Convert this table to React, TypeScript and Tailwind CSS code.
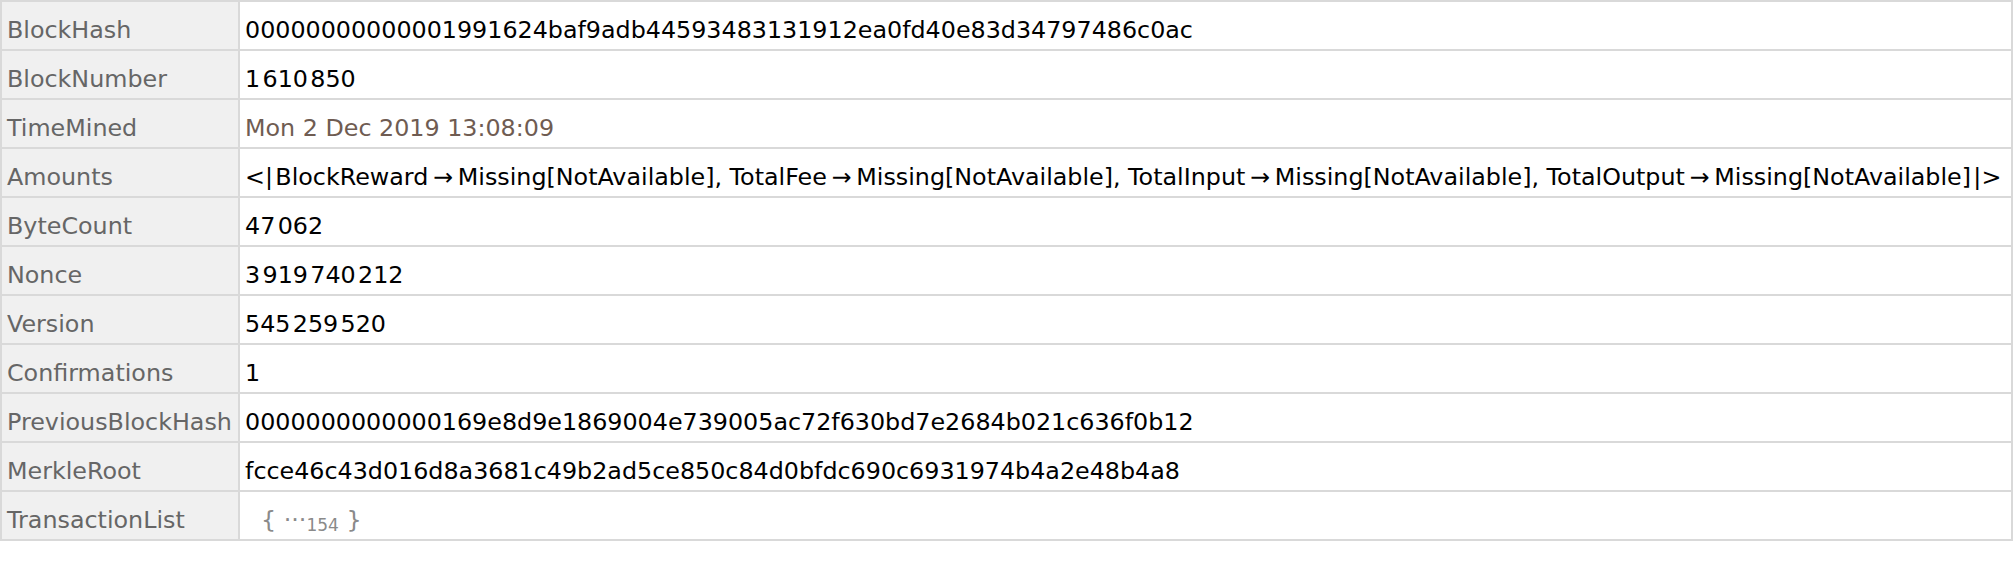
import React from "react";

const rows: { label: string; value: React.ReactNode }[] = [
  { label: "BlockHash", value: "0000000000000" + "1991624baf9adb44593483131912ea0fd40e83d34797486c0ac" },
  { label: "BlockNumber", value: "1\u200a610\u200a850" },
  { label: "TimeMined", value: <span className="text-[#6f5c52]">Mon 2 Dec 2019 13:08:09</span> },
  {
    label: "Amounts",
    value: (
      <span>
        {"<|\u200aBlockReward\u2009\u2192\u2009Missing[NotAvailable], TotalFee\u2009\u2192\u2009Missing[NotAvailable], TotalInput\u2009\u2192\u2009Missing[NotAvailable], TotalOutput\u2009\u2192\u2009Missing[NotAvailable]\u200a|>"}
      </span>
    ),
  },
  { label: "ByteCount", value: "47\u200a062" },
  { label: "Nonce", value: "3\u200a919\u200a740\u200a212" },
  { label: "Version", value: "545\u200a259\u200a520" },
  { label: "Confirmations", value: "1" },
  { label: "PreviousBlockHash", value: "0000000000000169e8d9e1869004e739005ac72f630bd7e2684b021c636f0b12" },
  { label: "MerkleRoot", value: "fcce46c43d016d8a3681c49b2ad5ce850c84d0bfdc690c6931974b4a2e48b4a8" },
  {
    label: "TransactionList",
    value: (
      <span className="pl-[16px] text-[#8a8a8a]">
        {"{ \u00b7\u00b7\u00b7"}
        <span className="relative top-[3px] text-[17px]">154</span>
        {" }"}
      </span>
    ),
  },
];

export default function App() {
  return (
    <div className="w-[2015px] h-[573px] bg-white" style={{ fontFamily: '"DejaVu Sans", Verdana, sans-serif' }}>
      <div className="grid w-[2013px] grid-cols-[236px_1fr] gap-[2px] bg-[#d9d9d9] p-[2px]">
        {rows.map((r) => (
          <React.Fragment key={r.label}>
            <div className="h-[47px] bg-[#f0f0f0] pl-[5px] pt-[9px] text-[23.8px] leading-[38px] text-[#666666] whitespace-nowrap">
              {r.label}
            </div>
            <div className="h-[47px] bg-white pl-[5px] pt-[9px] text-[23.8px] leading-[38px] text-black whitespace-nowrap">
              {r.value}
            </div>
          </React.Fragment>
        ))}
      </div>
    </div>
  );
}
